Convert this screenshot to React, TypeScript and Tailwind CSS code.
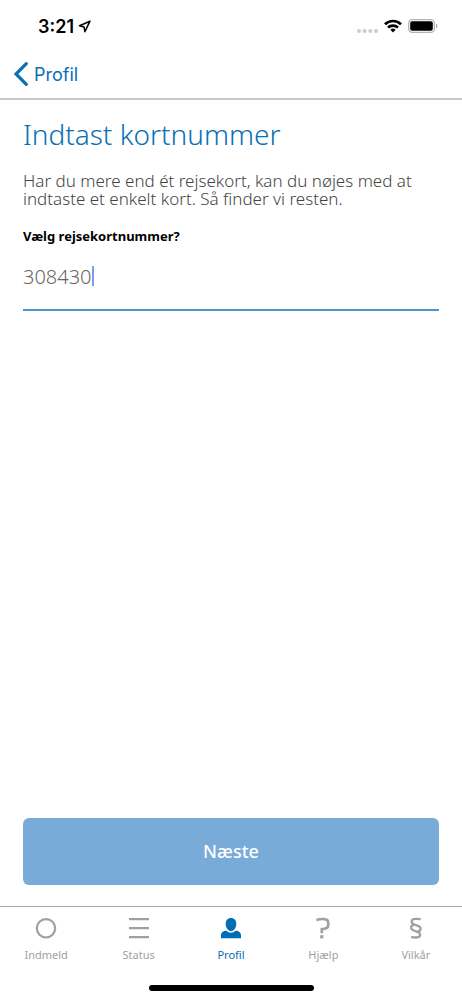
import { useState, type ReactNode } from "react";

const strokeProps = {
  fill: "none",
  stroke: "currentColor",
  "aria-hidden": true,
} as const;

function StatusBar() {
  return (
    <div className="flex h-[50px] items-center justify-between pt-[2px] pr-6 pl-[38px] text-black">
      <div className="flex items-center gap-1 font-['Inter',sans-serif] text-[18px] font-semibold">
        <span>3:21</span>
        <svg width="13" height="13" viewBox="0 0 13 13" {...strokeProps} strokeWidth="1.5" strokeLinejoin="round">
          <path d="M12 1.200 1.500 5.700l4.500 1.300.9 4.700z" />
        </svg>
      </div>
      <div className="flex items-center gap-[6px]">
        <svg className="mt-[9px]" width="21" height="4" viewBox="0 0 21 4" fill="#cbcbcb" aria-hidden="true">
          <circle cx="2" cy="2" r="2" />
          <circle cx="7.6" cy="2" r="2" />
          <circle cx="13.3" cy="2" r="2" />
          <circle cx="19" cy="2" r="2" />
        </svg>
        <svg width="18" height="14" viewBox="0 0 18 14" {...strokeProps} strokeWidth="2.7">
          <path d="M1 5.2a11.6 11.6 0 0 1 16 0" />
          <path d="M4 8.6a7.3 7.3 0 0 1 10 0" />
          <path d="M9 13.4 6.4 10.8a3.8 3.8 0 0 1 5.2 0z" fill="currentColor" stroke="none" />
        </svg>
        <svg width="30" height="14" viewBox="0 0 30 14" aria-hidden="true">
          <rect x=".7" y=".7" width="25.6" height="12.6" rx="3.6" fill="none" stroke="#b4b4b4" strokeWidth="1.3" />
          <rect x="2.2" y="2.3" width="22.6" height="9.4" rx="2" />
          <path d="M28 5c2 .6 2 3.400 0 4z" fill="#a5a5a5" />
        </svg>
      </div>
    </div>
  );
}

type TabProps = { label: string; active?: boolean; children: ReactNode };

function Tab({ label, active = false, children }: TabProps) {
  return (
    <a
      href="#"
      aria-current={active ? "page" : undefined}
      className={`flex flex-1 flex-col items-center gap-2 text-[11px] leading-4 ${
        active ? "text-[#006eb5]" : "text-[#a0a0a0]"
      }`}
    >
      <svg width="22" height="22" viewBox="0 0 22 22" {...strokeProps} strokeWidth="2">
        {children}
      </svg>
      <span>{label}</span>
    </a>
  );
}

export default function App() {
  const [cardNumber, setCardNumber] = useState("308430");

  return (
    <div className="flex min-h-screen flex-col bg-white font-['Noto_Sans',sans-serif]">
      <StatusBar />
      <header className="flex h-[50px] items-center border-b-2 border-[#c8c8c8] px-[14px]">
        <a href="#" className="flex items-center gap-[6px] font-['Inter',sans-serif] text-[18px] text-[#0870b3]">
          <svg width="14" height="24" viewBox="0 0 14 24" {...strokeProps} strokeWidth="3.200" strokeLinecap="round">
            <path d="M12.300 1.700 2 12l10.300 10.300" />
          </svg>
          Profil
        </a>
      </header>

      <main className="flex flex-1 flex-col px-[23px] pt-[18px] pb-[21px]">
        <h1 className="text-[28px] leading-8 font-light text-[#0870b3]">Indtast kortnummer</h1>
        <p className="mt-[22px] text-[17px] leading-[18px] font-light text-[#444]">
          Har du mere end ét rejsekort, kan du nøjes med at indtaste et enkelt kort. Så finder vi resten.
        </p>
        <label htmlFor="card-number" className="mt-[18px] text-[13px] leading-5 font-bold text-black">
          Vælg rejsekortnummer?
        </label>
        <div className="mt-3 flex h-[53px] items-start border-b-2 border-[#4a97cc] pt-2">
          <input
            id="card-number"
            inputMode="numeric"
            value={cardNumber}
            onChange={(event) => setCardNumber(event.target.value)}
            className="field-sizing-content h-5 max-w-full text-[20px] leading-5 font-light text-[#666] caret-transparent outline-none"
          />
          <span aria-hidden="true" className="h-5 w-[2px] bg-[#809af0]" />
        </div>
        <button type="button" className="mt-auto h-[67px] rounded-[6px] bg-[#78abd7] text-[18px] font-medium text-white">
          Næste
        </button>
      </main>

      <nav className="flex border-t border-[#a8a8a8] pt-[10px]">
        <Tab label="Indmeld">
          <circle cx="11" cy="11.300" r="9.200" strokeWidth="2.200" />
        </Tab>
        <Tab label="Status">
          <path d="M1 2.200h20M1 11.200h20M1 20.200h20" strokeWidth="2.200" />
        </Tab>
        <Tab label="Profil" active>
          <g fill="currentColor" stroke="none">
            <path d="M11 1c3.300 0 5.300 2.400 5.300 5.800 0 3.700-2.200 7.400-5.300 7.400s-5.300-3.700-5.300-7.400C5.700 3.400 7.700 1 11 1z" />
            <path d="M1 21.300v-2.500c0-3.300 2.200-4.900 5.500-5 1.200 1.300 2.700 1.900 4.500 1.900s3.300-.6 4.500-1.900c3.300.1 5.500 1.700 5.500 5v2.500z" />
          </g>
        </Tab>
        <Tab label="Hjælp">
          <path d="M4.300 2.900c2.800-.7 5.500-.9 7.700-.8 3 .1 4.300 1.200 4.300 3.700v1.900c0 2.700-1.300 3.700-3.800 4l-2.700.4v4.200" strokeWidth="2.600" />
          <path d="M8.200 18.200h3.200v3.200H8.200z" fill="currentColor" stroke="none" />
        </Tab>
        <Tab label="Vilkår">
          <path
            strokeWidth="2.300"
            d="M15.700 2.200c-1.700-.3-3.300-.4-5-.4-2.700 0-4 .8-4 2.600 0 1.700.9 2.500 2.700 3.100l3.500 1.300c1.900.7 2.700 1.500 2.700 3 0 1.700-1 2.500-2.900 2.600M9 7.800c-2 .2-2.900 1-2.900 2.700 0 1.500.9 2.300 2.700 3l3.700 1.400c1.800.7 2.600 1.400 2.600 2.900 0 2-1.300 2.700-4 2.700-1.700 0-3.300-.1-5-.4"
          />
        </Tab>
      </nav>
      <div className="flex h-[37px] items-end justify-center pb-[9px]">
        <div className="h-[6px] w-[165px] rounded-full bg-black" />
      </div>
    </div>
  );
}
